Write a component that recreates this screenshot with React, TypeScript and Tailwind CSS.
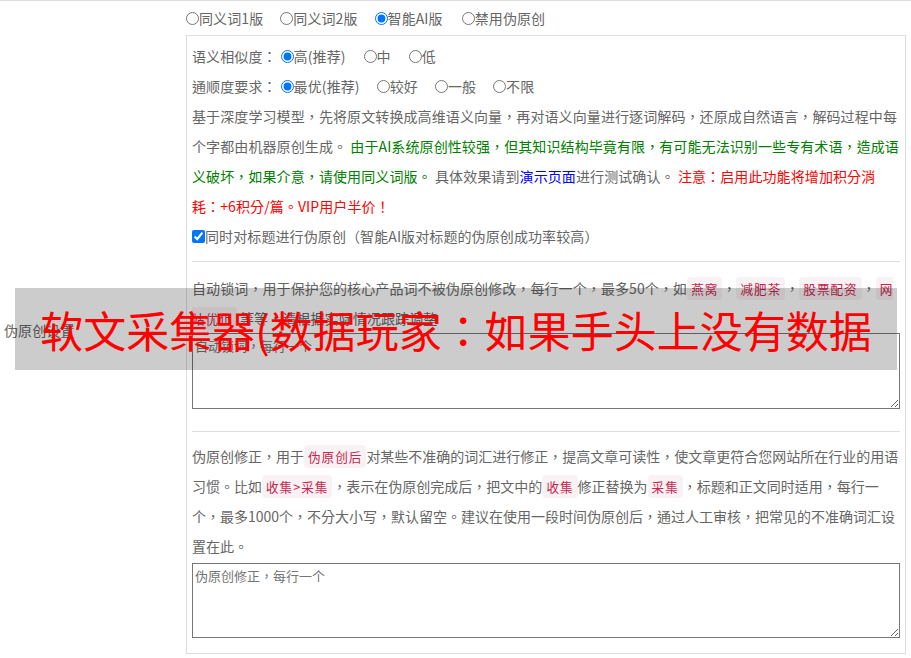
import React from 'react'

const font = { fontFamily: '"Noto Sans CJK TC", "Noto Sans CJK SC", sans-serif' }

function Code({ children }: { children: React.ReactNode }) {
    return (
        <code className="bg-[#f9f2f4] text-[#c7254e] text-[12.6px] leading-none px-[4px] py-[2px] rounded-[4px] tracking-[1px]" style={font}>
            {children}
        </code>
    )
}

function Radio({ name, label, checked, className = '' }: { name: string; label: string; checked?: boolean; className?: string }) {
    return (
        <label className={`inline-flex items-center ${className}`}>
            <input type="radio" name={name} defaultChecked={checked} className="w-[13px] h-[13px]" />
            <span>{label}</span>
        </label>
    )
}

export default function App() {
    return (
        <div className="relative w-[911px] text-[14px] text-[#666] tracking-[0.1px]" style={font}>
            <div className="flex items-center border-t border-[#ddd] pr-[5px]">
                {/* Left label */}
                <div className="w-[186px] pl-[4px] shrink-0">伪原创设置</div>

                {/* Right cell */}
                <div className="flex-1 pt-[2px] pb-[6px]">
                    <div className="flex items-center h-[30px] gap-[17px]">
                        <Radio name="mode" label="同义词1版" />
                        <Radio name="mode" label="同义词2版" />
                        <Radio name="mode" label="智能AI版" checked />
                        <Radio name="mode" label="禁用伪原创" className="ml-[2px]" />
                    </div>

                    <div className="mt-[2px] border border-[#ddd] px-[5px] pt-[5px] pb-[15px]">
                        <div className="flex items-center h-[30px]">
                            <span className="mr-[4px]">语义相似度：</span>
                            <div className="flex items-center gap-[18px]">
                                <Radio name="sim" label="高(推荐)" checked />
                                <Radio name="sim" label="中" />
                                <Radio name="sim" label="低" />
                            </div>
                        </div>
                        <div className="flex items-center h-[30px]">
                            <span className="mr-[4px]">通顺度要求：</span>
                            <div className="flex items-center gap-[17px]">
                                <Radio name="flu" label="最优(推荐)" checked />
                                <Radio name="flu" label="较好" />
                                <Radio name="flu" label="一般" />
                                <Radio name="flu" label="不限" />
                            </div>
                        </div>

                        <p className="leading-[30px]">
                            基于深度学习模型，先将原文转换成高维语义向量，再对语义向量进行逐词解码，还原成自然语言，解码过程中每个字都由机器原创生成。{' '}
                            <span className="text-[#008000]">由于AI系统原创性较强，但其知识结构毕竟有限，有可能无法识别一些专有术语，造成语义破坏，如果介意，请使用同义词版。</span>
                            {' '}具体效果请到<span className="text-[#0000ff]">演示页面</span>进行测试确认。{' '}
                            <span className="text-[#ff0000]">注意：启用此功能将增加积分消耗：+6积分/篇。VIP用户半价！</span>
                        </p>
                        <label className="flex items-center h-[30px]">
                            <input type="checkbox" defaultChecked className="w-[13px] h-[13px]" />
                            <span>同时对标题进行伪原创（智能AI版对标题的伪原创成功率较高）</span>
                        </label>

                        <hr className="mt-[10px] mb-[11px] border-t border-[#ddd]" />

                        <p className="leading-[30px]">
                            自动锁词，用于保护您的核心产品词不被伪原创修改，每行一个，最多50个，如<Code>燕窝</Code>，<Code>减肥茶</Code>，<Code>股票配资</Code>，<Code>网站优化</Code> 等等，请根据实际情况跟踪调整
                        </p>
                        <textarea
                            placeholder="自动锁词，每行一个"
                            className="block w-full h-[76px] border border-[#767676] px-[2px] py-[2px] text-[13px] tracking-normal placeholder:text-[#757575]"
                            style={font}
                        />

                        <hr className="mt-[22px] mb-[9px] border-t border-[#ddd]" />

                        <p className="leading-[30px] tracking-normal">
                            伪原创修正，用于<Code>伪原创后</Code>对某些不准确的词汇进行修正，提高文章可读性，使文章更符合您网站所在行业的用语习惯。比如<Code>收集&gt;采集</Code>，表示在伪原创完成后，把文中的<Code>收集</Code>修正替换为<Code>采集</Code>，标题和正文同时适用，每行一个，最多1000个，不分大小写，默认留空。建议在使用一段时间伪原创后，通过人工审核，把常见的不准确词汇设置在此。
                        </p>
                        <textarea
                            placeholder="伪原创修正，每行一个"
                            className="block w-full h-[75px] mt-[2px] border border-[#767676] px-[2px] py-[2px] text-[13px] tracking-normal placeholder:text-[#757575]"
                            style={font}
                        />
                    </div>
                </div>
            </div>

            {/* Overlay banner */}
            <div className="absolute left-[15px] top-[288px] w-[882px] h-[82px] bg-black/20 flex items-center justify-center">
                <span className="text-[#ff0000] text-[43px] leading-none whitespace-nowrap tracking-normal" style={font}>
                    软文采集器(数据玩家：如果手头上没有数据
                </span>
            </div>
        </div>
    )
}
